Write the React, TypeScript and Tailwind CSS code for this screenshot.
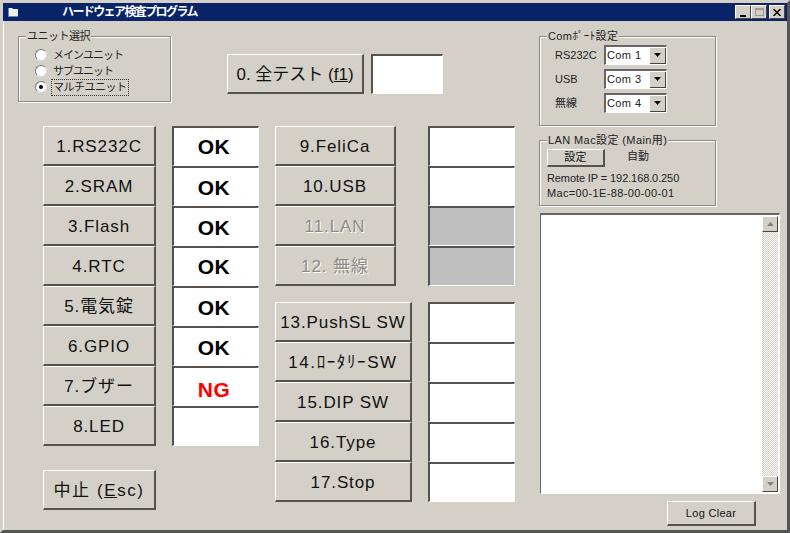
import React from "react";

const FONT = "[font-family:'Liberation_Sans','Noto_Sans_CJK_JP',sans-serif]";

function Btn({ w, h = "h-10", children, disabled, small }: { w: string; h?: string; children: React.ReactNode; disabled?: boolean; small?: boolean }) {
  return (
    <div
      className={`${w} ${h} flex items-center justify-center shrink-0 bg-[#d4d0c8] border-t border-l border-t-white border-l-white border-b-2 border-r-2 border-b-[#55524c] border-r-[#55524c] ${
        small ? "text-[11px] tracking-[0.3px]" : "text-[17px] tracking-[0.9px] pt-[3px]"
      } ${disabled ? "text-[#8c8a85] [text-shadow:1px_1px_0_#fff]" : "text-[#111]"}`}
    >
      {children}
    </div>
  );
}

function Res({ children, red, off, w = "w-[87px]", pad = "" }: { children?: React.ReactNode; red?: boolean; off?: boolean; w?: string; pad?: string }) {
  return (
    <div
      className={`${w} ${pad} h-10 flex items-center justify-center border-t-2 border-l-2 border-t-[#55524c] border-l-[#55524c] border-b border-r border-b-white border-r-white text-[21px] font-bold tracking-[0.5px] ${
        off ? "bg-[#bfbfbf]" : "bg-white"
      } ${red ? "text-[#ff0000]" : "text-black"}`}
    >
      {children && <span className="mr-[4px]">{children}</span>}
    </div>
  );
}

function Group({ title, cls, children }: { title: React.ReactNode; cls: string; children: React.ReactNode }) {
  return (
    <fieldset className={`${cls} border border-[#8a8883] shadow-[1px_1px_0_#fff,inset_1px_1px_0_#fff] shrink-0`}>
      <legend className="ml-[7px] px-[1px] bg-[#d4d0c8] text-[11px] leading-[12px] text-[#222] tracking-[0.4px]">{title}</legend>
      {children}
    </fieldset>
  );
}

function Radio({ label, on, track }: { label: string; on?: boolean; track: string }) {
  return (
    <div className="flex items-center h-4 text-[11px] text-[#222]">
      <span className="w-3 h-3 rounded-full bg-white border border-[#777] border-b-[#ddd] border-r-[#ddd] flex items-center justify-center shrink-0">
        {on && <span className="w-1 h-1 rounded-full bg-black" />}
      </span>
      <span className={`ml-[5px] px-[1px] h-[15px] leading-[14px] ${track} ${on ? "outline outline-1 outline-dotted outline-[#333]" : ""}`}>{label}</span>
    </div>
  );
}

function Combo({ label, value }: { label: string; value: string }) {
  return (
    <div className="flex items-center h-[18px] mb-[6px] text-[11px] text-[#222]">
      <span className="w-[64px] pl-[15px] whitespace-nowrap">{label}</span>
      <div className="w-[63px] h-[20px] flex items-center justify-between bg-white border-t-2 border-l-2 border-t-[#666] border-l-[#666] border-b border-r border-b-white border-r-white tracking-[0.4px] pl-[1px]">
        <span>{value}</span>
        <span className="w-4 h-4 flex items-center justify-center bg-[#d4d0c8] border-r border-b border-r-[#444] border-b-[#444]">
          <svg width="7" height="4" viewBox="0 0 7 4"><path d="M0 0h7L3.5 4z" fill="#000" /></svg>
        </span>
      </div>
    </div>
  );
}

function SbBtn({ up }: { up?: boolean }) {
  return (
    <div className="w-4 h-4 shrink-0 flex items-center justify-center bg-[#d4d0c8] border-t border-l border-t-white border-l-white border-b border-r border-b-[#444] border-r-[#444]">
      <svg width="7" height="4" viewBox="0 0 7 4">
        <path d={up ? "M0 4h7L3.5 0z" : "M0 0h7L3.5 4z"} fill="#808080" />
      </svg>
    </div>
  );
}

export default function App() {
  const left: { l: string; r: string; red?: boolean; pad: string }[] = [
    { l: "1.RS232C", r: "OK", pad: "" },
    { l: "2.SRAM", r: "OK", pad: "pt-[3px]" },
    { l: "3.Flash", r: "OK", pad: "pt-[3px]" },
    { l: "4.RTC", r: "OK", pad: "pt-[1px]" },
    { l: "5.電気錠", r: "OK", pad: "pt-[3px]" },
    { l: "6.GPIO", r: "OK", pad: "pt-[3px]" },
    { l: "7.ブザー", r: "NG", red: true, pad: "pt-[6px]" },
    { l: "8.LED", r: "", pad: "" },
  ];
  return (
    <div className={`w-[790px] h-[533px] bg-[#d4d0c8] flex flex-col overflow-hidden border-[3px] border-[#d4d0c8] border-b-[#555] border-r-[#555] shadow-[inset_1px_1px_0_#fff] ${FONT}`}>
      <div className="h-[18px] shrink-0 bg-[#0a246a] flex items-center text-white">
        <svg className="ml-[3px]" width="14" height="14" viewBox="0 0 14 14">
          <path d="M2 3h4l1 1h5v7H3z" fill="#e8f0f0" />
          <path d="M2 3h1v8h9v1H2z" fill="#6a8a9a" />
        </svg>
        <span className="ml-[42px] text-[12px] font-bold tracking-[-1.6px] leading-none">ハードウェア検査プログラム</span>
        <div className="ml-auto mr-[2px] flex">
          {["min", "max", "close"].map((k) => (
            <div key={k} className={`w-4 h-[14px] bg-[#d4d0c8] border-t border-l border-t-white border-l-white border-b border-r border-b-[#444] border-r-[#444] flex items-center justify-center ${k === "close" ? "ml-[2px]" : ""}`}>
              {k === "min" && <span className="w-[6px] h-[2px] bg-black mt-[7px] -ml-[1px]" />}
              {k === "max" && <span className="w-[9px] h-[8px] border border-[#9a9a9a] border-t-2" />}
              {k === "close" && (
                <svg width="8" height="7" viewBox="0 0 8 7"><path d="M0.5 0L7.5 7M7.5 0L0.5 7" stroke="#000" strokeWidth="1.5" /></svg>
              )}
            </div>
          ))}
        </div>
      </div>

      <div className="flex flex-1 pl-[15px]">
        <div className="w-[521px] shrink-0 flex flex-col">
          <div className="flex items-start mt-[9px]">
            <Group title={<span className="tracking-[-0.5px]">ユニット選択</span>} cls="w-[153px] h-[72px]">
              <div className="pl-[16px] pt-[5px]">
                <Radio label="メインユニット" track="tracking-[-1px]" />
                <Radio label="サブユニット" track="tracking-[-1px]" />
                <Radio label="マルチユニット" on track="tracking-[-0.5px]" />
              </div>
            </Group>
            <div className="ml-[56px] mt-[24px]">
              <Btn w="w-[137px]">
                <span className="tracking-[0px]">0. 全テスト (<span className="underline">f1</span>)</span>
              </Btn>
            </div>
            <div className="ml-[7px] mt-[24px]">
              <Res w="w-[72px]" />
            </div>
          </div>

          <div className="flex mt-[24px] pl-[25px]">
            <div className="flex flex-col">
              <div className="flex">
                <div className="flex flex-col">
                  {left.map((d) => (
                    <Btn key={d.l} w="w-[113px]">{d.l}</Btn>
                  ))}
                </div>
                <div className="flex flex-col ml-4">
                  {left.map((d) => (
                    <Res key={d.l} red={d.red} pad={d.pad}>{d.r}</Res>
                  ))}
                </div>
              </div>
              <div className="mt-6">
                <Btn w="w-[113px]">
                  <span className="tracking-[1.6px]">中止 (<span className="underline">E</span>sc)</span>
                </Btn>
              </div>
            </div>

            <div className="flex flex-col ml-4">
              <div className="flex">
                <div className="flex flex-col">
                  <Btn w="w-[121px]">9.FeliCa</Btn>
                  <Btn w="w-[121px]">10.USB</Btn>
                  <Btn w="w-[121px]" disabled>11.LAN</Btn>
                  <Btn w="w-[121px]" disabled>12. 無線</Btn>
                </div>
                <div className="flex flex-col ml-8">
                  <Res /><Res /><Res off /><Res off />
                </div>
              </div>
              <div className="flex mt-4">
                <div className="flex flex-col">
                  <Btn w="w-[137px]">13.PushSL SW</Btn>
                  <Btn w="w-[137px]"><span className="tracking-[1.6px]">14.ﾛｰﾀﾘｰSW</span></Btn>
                  <Btn w="w-[137px]">15.DIP SW</Btn>
                  <Btn w="w-[137px]">16.Type</Btn>
                  <Btn w="w-[137px]">17.Stop</Btn>
                </div>
                <div className="flex flex-col ml-4">
                  <Res /><Res /><Res /><Res /><Res />
                </div>
              </div>
            </div>
          </div>
        </div>

        <div className="w-[240px] shrink-0 flex flex-col">
          <Group title="Comﾎﾟｰﾄ設定" cls="w-[177px] h-[96px] mt-[9px]">
            <div className="pt-[4px]">
              <Combo label="RS232C" value="Com 1" />
              <Combo label="USB" value="Com 3" />
              <Combo label="無線" value="Com 4" />
            </div>
          </Group>
          <Group title="LAN Mac設定 (Main用)" cls="w-[177px] h-[72px] mt-[8px]">
            <div className="pl-[7px] pt-[3px] text-[11px] text-[#222]">
              <div className="flex items-center">
                <Btn w="w-[58px]" h="h-[18px]" small>設定</Btn>
                <span className="ml-[22px] -mt-[3px]">自動</span>
              </div>
              <div className="mt-[3px] leading-[16px] tracking-[-0.1px]">Remote IP = 192.168.0.250</div>
              <div className="leading-[15px] tracking-[0.35px]">Mac=00-1E-88-00-00-01</div>
            </div>
          </Group>
          <div className="w-[240px] h-[281px] mt-[7px] ml-[1px] flex justify-end bg-white border-t-2 border-l border-t-[#666] border-l-[#666] border-b border-r border-b-white border-r-white pr-[1px]">
            <div className="w-4 flex flex-col mt-[1px] mb-[1px]">
              <SbBtn up />
              <div className="flex-1 bg-[repeating-conic-gradient(#d4d0c8_0_25%,#fff_0_50%)] bg-[length:2px_2px]" />
              <SbBtn />
            </div>
          </div>
          <div className="ml-[128px] mt-[7px]">
            <Btn w="w-[89px]" h="h-[25px]" small>Log Clear</Btn>
          </div>
        </div>
      </div>
    </div>
  );
}
